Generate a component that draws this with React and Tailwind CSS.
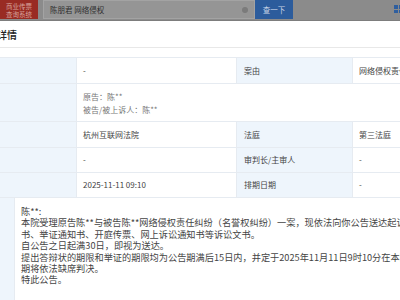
import React from "react";

const font = { fontFamily: '"Noto Sans CJK SC", "Noto Sans", sans-serif' };

const Label = ({ children, className = "" }) => (
  <div className={`bg-[#eef5fc] border-r border-[#e6ebf1] flex items-center px-[7px] text-[#444] ${className}`}>
    {children}
  </div>
);

const Value = ({ children, className = "" }) => (
  <div className={`border-r border-[#e6ebf1] flex items-center px-[6px] text-[#444] ${className}`}>
    {children}
  </div>
);

const notice = [
  "陈**:",
  "本院受理原告陈**与被告陈**网络侵权责任纠纷（名誉权纠纷）一案，现依法向你公告送达起诉状副本、应诉通知",
  "书、举证通知书、开庭传票、网上诉讼通知书等诉讼文书。",
  "自公告之日起满30日，即视为送达。",
  "提出答辩状的期限和举证的期限均为公告期满后15日内，并定于2025年11月11日9时10分在本院第三法庭公开开庭审理，逾",
  "期将依法缺席判决。",
  "特此公告。",
];

export default function App() {
  return (
    <div className="w-[400px] h-[300px] overflow-hidden bg-white text-[8px]" style={font}>
      {/* header under dark mask */}
      <div className="h-[21px] bg-[#8b8b8b] border-b border-[#7d7d7d] flex items-start">
        <div className="w-[38px] h-[19px] bg-[#992b23] overflow-hidden flex flex-col items-center justify-end pb-[1px] leading-[8px] text-[6.5px] text-[#d7a19c]">
          <span>商业传票</span>
          <span>查询系统</span>
        </div>
        <div className="ml-[5px] w-[212px] h-[19px] bg-[#959595] border border-[#a3a3a3] flex items-center pl-[6px] pr-[6px] text-[7.5px] text-[#2f2f2f]">
          <span className="flex-1">陈朋君 网络侵权</span>
          <span className="w-[6px] h-[6px] rounded-full bg-[#7b7b7b]" />
        </div>
        <div className="w-[38px] h-[19px] bg-[#2c5c9c] flex items-center justify-center text-[7.5px] text-[#c9d4e6]">
          查一下
        </div>
        <div className="flex-1" />
        <div className="mt-[5px] mr-[-3px] grid grid-cols-2 gap-px w-[9px] h-[8px]">
          <span className="bg-[#2f5f9f]" />
          <span className="bg-[#2f5f9f]" />
          <span className="bg-[#2f5f9f]" />
          <span className="bg-[#2f5f9f]" />
        </div>
      </div>

      {/* title */}
      <div className="h-[27px] border-b border-[#e8e8e8] flex items-center">
        <span className="ml-[-3px] text-[10px] font-medium text-[#222]">详情</span>
      </div>

      {/* table */}
      <div className="mt-[9px] border-t border-[#e6ebf1] w-[460px]">
        <div className="flex h-[26px] border-b border-[#e6ebf1]">
          <Label className="w-[77px]" />
          <Value className="w-[160px]">-</Value>
          <Label className="w-[116px]">案由</Label>
          <Value className="flex-1 whitespace-nowrap">网络侵权责任纠纷</Value>
        </div>
        <div className="flex h-[38px] border-b border-[#e6ebf1]">
          <Label className="w-[77px]" />
          <div className="flex-1 flex flex-col justify-center px-[6px] leading-[13px] text-[#777]">
            <span>原告：陈**</span>
            <span>被告/被上诉人：陈**</span>
          </div>
        </div>
        <div className="flex h-[26px] border-b border-[#e6ebf1]">
          <Label className="w-[77px]" />
          <Value className="w-[160px]">杭州互联网法院</Value>
          <Label className="w-[116px]">法庭</Label>
          <Value className="flex-1">第三法庭</Value>
        </div>
        <div className="flex h-[25px] border-b border-[#e6ebf1]">
          <Label className="w-[77px]" />
          <Value className="w-[160px]">-</Value>
          <Label className="w-[116px]">审判长/主审人</Label>
          <Value className="flex-1">-</Value>
        </div>
        <div className="flex h-[25px] border-b border-[#e6ebf1]">
          <Label className="w-[77px]" />
          <Value className="w-[160px]">2025-11-11 09:10</Value>
          <Label className="w-[116px]">排期日期</Label>
          <Value className="flex-1">-</Value>
        </div>
        <div className="flex h-[110px]">
          <Label className="w-[77px]" />
          <div className="flex-1 px-[6px] pt-[8px] leading-[11.4px] text-[9.2px] text-[#444]">
            {notice.map((line, i) => (
              <div key={i} className="whitespace-nowrap">
                {line}
              </div>
            ))}
          </div>
        </div>
      </div>
    </div>
  );
}
